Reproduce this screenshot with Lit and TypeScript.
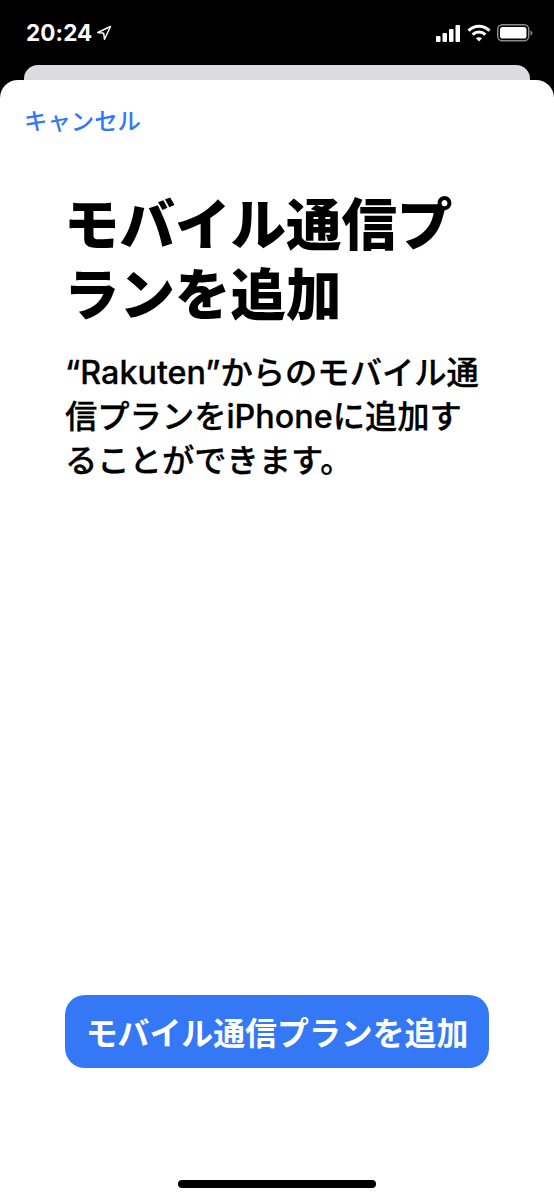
import { LitElement, html, css } from "lit";
import { customElement } from "lit/decorators.js";

@customElement("app-root")
export class AppRoot extends LitElement {
  static styles = css`
    :host {
      display: block;
      width: 554px;
      height: 1200px;
      background: #000;
      font-family: "Inter", "Noto Sans CJK JP", sans-serif;
      overflow: hidden;
    }
    .status {
      height: 65px;
      box-sizing: border-box;
      padding: 21px 21px 0 26px;
      display: flex;
      justify-content: space-between;
      align-items: flex-start;
      color: #fff;
    }
    .left { display: flex; align-items: center; gap: 4px; height: 24px; }
    .time { font: 700 22.5px/24px "Inter", sans-serif; letter-spacing: 0.1px; }
    .right { display: flex; align-items: center; gap: 6px; height: 24px; }
    svg { display: block; }
    .back {
      height: 15px;
      margin: 0 24px;
      background: #dcdcde;
      border-radius: 14px 14px 0 0;
    }
    .sheet {
      height: 1120px;
      box-sizing: border-box;
      background: #fff;
      border-radius: 18px 18px 0 0;
      display: flex;
      flex-direction: column;
      padding: 25px 0 0;
      color: #000;
    }
    .cancel {
      margin-left: 24px;
      font-size: 23.4px;
      line-height: 34px;
      font-weight: 500;
      color: #3478f6;
    }
    .title {
      margin: 51px 64px 0;
      width: 400px;
      font-size: 55.5px;
      line-height: 70px;
      font-weight: 900;
    }
    .desc {
      margin: 21px 65px 0;
      width: 422px;
      font-size: 32.3px;
      line-height: 44px;
      font-weight: 500;
      -webkit-text-stroke: 0.3px #000;
    }
    .spacer { flex: 1; }
    .button {
      margin: 0 65px;
      height: 73px;
      border-radius: 20px;
      background: #3478f6;
      color: #fff;
      font-size: 31.9px;
      font-weight: 700;
      display: flex;
      align-items: center;
      justify-content: center;
      white-space: nowrap;
      padding-bottom: 2px;
      box-sizing: border-box;
    }
    .home-wrap { height: 132px; display: flex; align-items: flex-end; justify-content: center; padding-bottom: 12px; box-sizing: border-box; }
    .home { width: 198px; height: 8px; border-radius: 4px; background: #000; }
  `;

  render() {
    return html`
      <div class="status">
        <div class="left">
          <span class="time">20:24</span>
          <svg width="16" height="16" viewBox="0 0 15 15" fill="none" stroke="#fff" stroke-width="1.4" stroke-linejoin="round">
            <path d="M13.6 1.4 1.6 7 7.2 7.8 8 13.4Z" />
          </svg>
        </div>
        <div class="right">
          <svg width="25" height="17" viewBox="0 0 25 17" fill="#fff">
            <rect x="0" y="11" width="4.500" height="6" rx="1" />
            <rect x="6.5" y="8" width="4.500" height="9" rx="1" />
            <rect x="13" y="4" width="4.500" height="13" rx="1" />
            <rect x="19.5" y="0" width="4.500" height="17" rx="1" />
          </svg>
          <svg width="24" height="18" viewBox="0 0 24 18" fill="none" stroke="#fff" stroke-width="3">
            <path d="M1.5 6.6C7.5 .8 16.5 .8 22.5 6.6" />
            <path d="M5.6 10.6C9.3 7.2 14.7 7.2 18.4 10.6" />
            <path d="M12 17.6 8.9 14.3C10.8 12.8 13.2 12.8 15.1 14.3Z" fill="#fff" stroke="none" />
          </svg>
          <svg width="36" height="18" viewBox="0 0 36 18">
            <rect x="0.75" y="0.75" width="31" height="16" rx="4.5" fill="none" stroke="#8a8a8e" stroke-width="1.5" />
            <rect x="3" y="3" width="26.5" height="11.6" rx="2.6" fill="#fff" />
            <path d="M33.5 6.500v5c1.200-.4 2-1.400 2-2.500s-.8-2.100-2-2.500Z" fill="#8a8a8e" />
          </svg>
        </div>
      </div>
      <div class="back"></div>
      <div class="sheet">
        <div class="cancel">キャンセル</div>
        <div class="title">モバイル通信プランを追加</div>
        <div class="desc">“Rakuten”からのモバイル通信プランをiPhoneに追加することができます。</div>
        <div class="spacer"></div>
        <div class="button">モバイル通信プランを追加</div>
        <div class="home-wrap"><div class="home"></div></div>
      </div>
    `;
  }
}
